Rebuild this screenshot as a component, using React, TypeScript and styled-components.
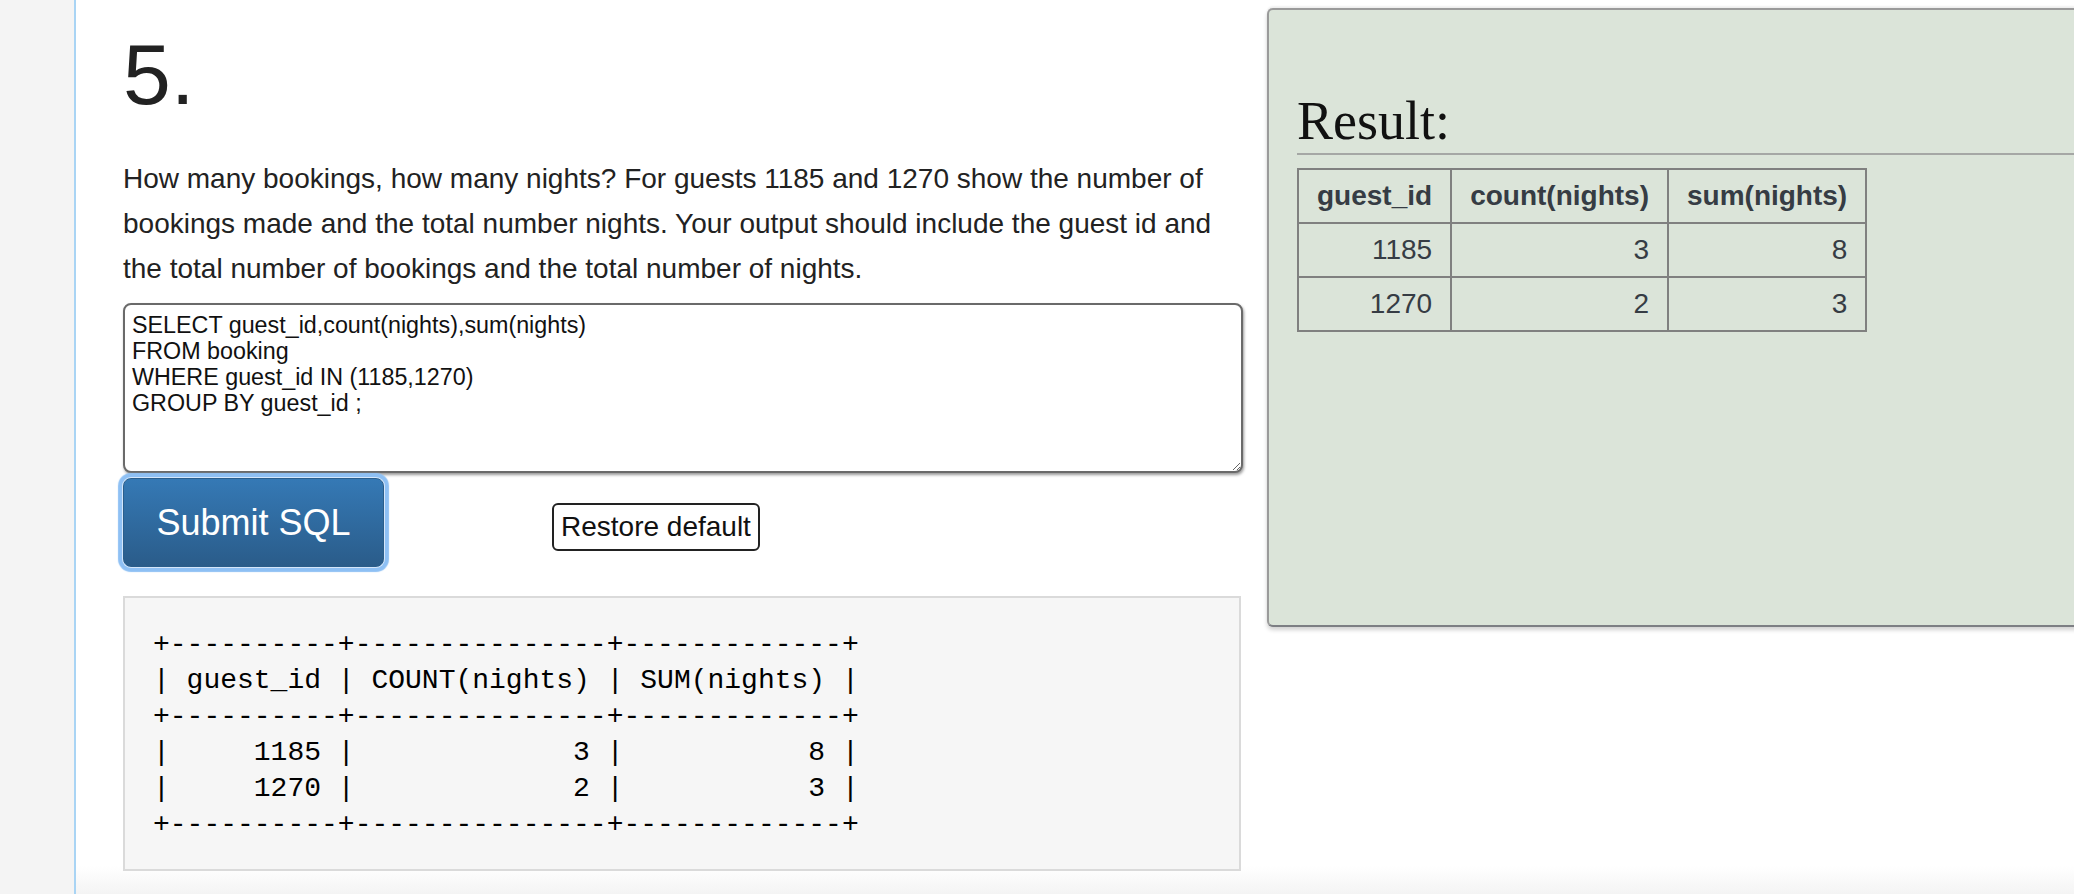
import React from 'react';
import styled, { createGlobalStyle } from 'styled-components';

const GlobalStyle = createGlobalStyle`
  html, body {
    margin: 0;
    padding: 0;
    overflow: hidden;
    background: #fff;
  }
  body {
    font-family: "Liberation Sans", Arial, Helvetica, sans-serif;
    color: #222;
  }
`;

const Page = styled.div`
  display: flex;
  width: 2074px;
  height: 894px;
  overflow: hidden;
  background: linear-gradient(to bottom, #fff 0, #fff 866px, #f4f4f4 894px);
`;

const Sidebar = styled.div`
  flex: 0 0 74px;
  background: #f4f4f4;
  border-right: 2px solid #a9d4f4;
`;

const Main = styled.div`
  display: flex;
  align-items: flex-start;
  gap: 24px;
  padding-left: 47px;
`;

const Question = styled.div`
  width: 1120px;
  flex-shrink: 0;
  padding-top: 31px;
`;

const Number = styled.h1`
  margin: 0;
  font-size: 86px;
  font-weight: normal;
  line-height: 1;
  color: #222;
`;

const Prompt = styled.p`
  margin: 39px 0 0;
  font-size: 28px;
  line-height: 45px;
  color: #222;
`;

const SqlBox = styled.textarea`
  display: block;
  box-sizing: border-box;
  width: 1120px;
  height: 170px;
  margin-top: 12px;
  padding: 7px 7px;
  border: 2px solid #6a6a6a;
  border-radius: 8px;
  box-shadow: 1px 2px 3px rgba(0, 0, 0, 0.4);
  font-family: "Liberation Sans", Arial, sans-serif;
  font-size: 23.3px;
  line-height: 26px;
  color: #111;
  background: #fff;
  resize: both;
  outline: none;
`;

const Buttons = styled.div`
  display: flex;
  align-items: flex-start;
  margin-top: 5px;
`;

const SubmitButton = styled.button`
  width: 261px;
  height: 89px;
  border: 1px solid #2a5e8c;
  border-radius: 8px;
  background: linear-gradient(to bottom, #3579b5 0%, #2a5c8a 100%);
  color: #fff;
  font-family: "Liberation Sans", Arial, sans-serif;
  font-size: 36px;
  box-shadow: 0 0 0 1px #d4e6fa, 0 0 1px 5px #8ec0f4;
  cursor: pointer;
`;

const RestoreButton = styled.button`
  margin: 25px 0 0 168px;
  height: 48px;
  padding: 0 7px;
  border: 2px solid #222;
  border-radius: 6px;
  background: #fff;
  color: #111;
  font-family: "Liberation Sans", Arial, sans-serif;
  font-size: 28px;
  line-height: 1;
  cursor: pointer;
`;

const Output = styled.pre`
  box-sizing: border-box;
  width: 1118px;
  height: 275px;
  margin: 29px 0 0;
  padding: 29px 28px;
  background: #f6f6f6;
  border: 2px solid #dadada;
  font-family: "Liberation Mono", "Courier New", monospace;
  font-size: 28px;
  line-height: 36px;
  color: #000;
`;

const ResultPanel = styled.section`
  flex-shrink: 0;
  box-sizing: border-box;
  width: 900px;
  height: 619px;
  margin-top: 8px;
  padding: 82px 0 0 28px;
  background: #dbe4d9;
  border: 2px solid #9a9a9a;
  border-right: none;
  border-bottom-color: #7d7f84;
  border-radius: 6px 0 0 6px;
  box-shadow: 0 -2px 2px rgba(0, 0, 0, 0.06), 0 3px 4px rgba(0, 0, 0, 0.18);
`;

const ResultTitle = styled.h2`
  margin: 0;
  font-family: "Liberation Serif", "Times New Roman", serif;
  font-size: 54px;
  font-weight: normal;
  line-height: 59px;
  color: #111;
`;

const Rule = styled.hr`
  margin: 2px 0 0;
  border: none;
  border-top: 2px solid #a5a7a5;
`;

const Table = styled.table`
  margin-top: 13px;
  border-collapse: collapse;
  border: 2px solid #808080;
  font-size: 28px;
  line-height: 32px;
  color: #363c44;
`;

const Th = styled.th`
  padding: 10px 18px;
  border: 2px solid #808080;
  font-weight: bold;
  text-align: center;
`;

const Td = styled.td`
  padding: 10px 18px;
  border: 2px solid #808080;
  text-align: right;
`;

const query = `SELECT guest_id,count(nights),sum(nights)
FROM booking
WHERE guest_id IN (1185,1270)
GROUP BY guest_id ;`;

const mysqlOutput = `+----------+---------------+-------------+
| guest_id | COUNT(nights) | SUM(nights) |
+----------+---------------+-------------+
|     1185 |             3 |           8 |
|     1270 |             2 |           3 |
+----------+---------------+-------------+`;

const rows = [
  { id: 1185, count: 3, sum: 8 },
  { id: 1270, count: 2, sum: 3 },
];

export default function App() {
  return (
    <Page>
      <GlobalStyle />
      <Sidebar />
      <Main>
        <Question>
          <Number>5.</Number>
          <Prompt>
            How many bookings, how many nights? For guests 1185 and 1270 show the number of
            bookings made and the total number nights. Your output should include the guest id
            and the total number of bookings and the total number of nights.
          </Prompt>
          <SqlBox defaultValue={query} spellCheck={false} />
          <Buttons>
            <SubmitButton>Submit SQL</SubmitButton>
            <RestoreButton>Restore default</RestoreButton>
          </Buttons>
          <Output>{mysqlOutput}</Output>
        </Question>
        <ResultPanel>
          <ResultTitle>Result:</ResultTitle>
          <Rule />
          <Table>
            <thead>
              <tr>
                <Th>guest_id</Th>
                <Th>count(nights)</Th>
                <Th>sum(nights)</Th>
              </tr>
            </thead>
            <tbody>
              {rows.map((r) => (
                <tr key={r.id}>
                  <Td>{r.id}</Td>
                  <Td>{r.count}</Td>
                  <Td>{r.sum}</Td>
                </tr>
              ))}
            </tbody>
          </Table>
        </ResultPanel>
      </Main>
    </Page>
  );
}
